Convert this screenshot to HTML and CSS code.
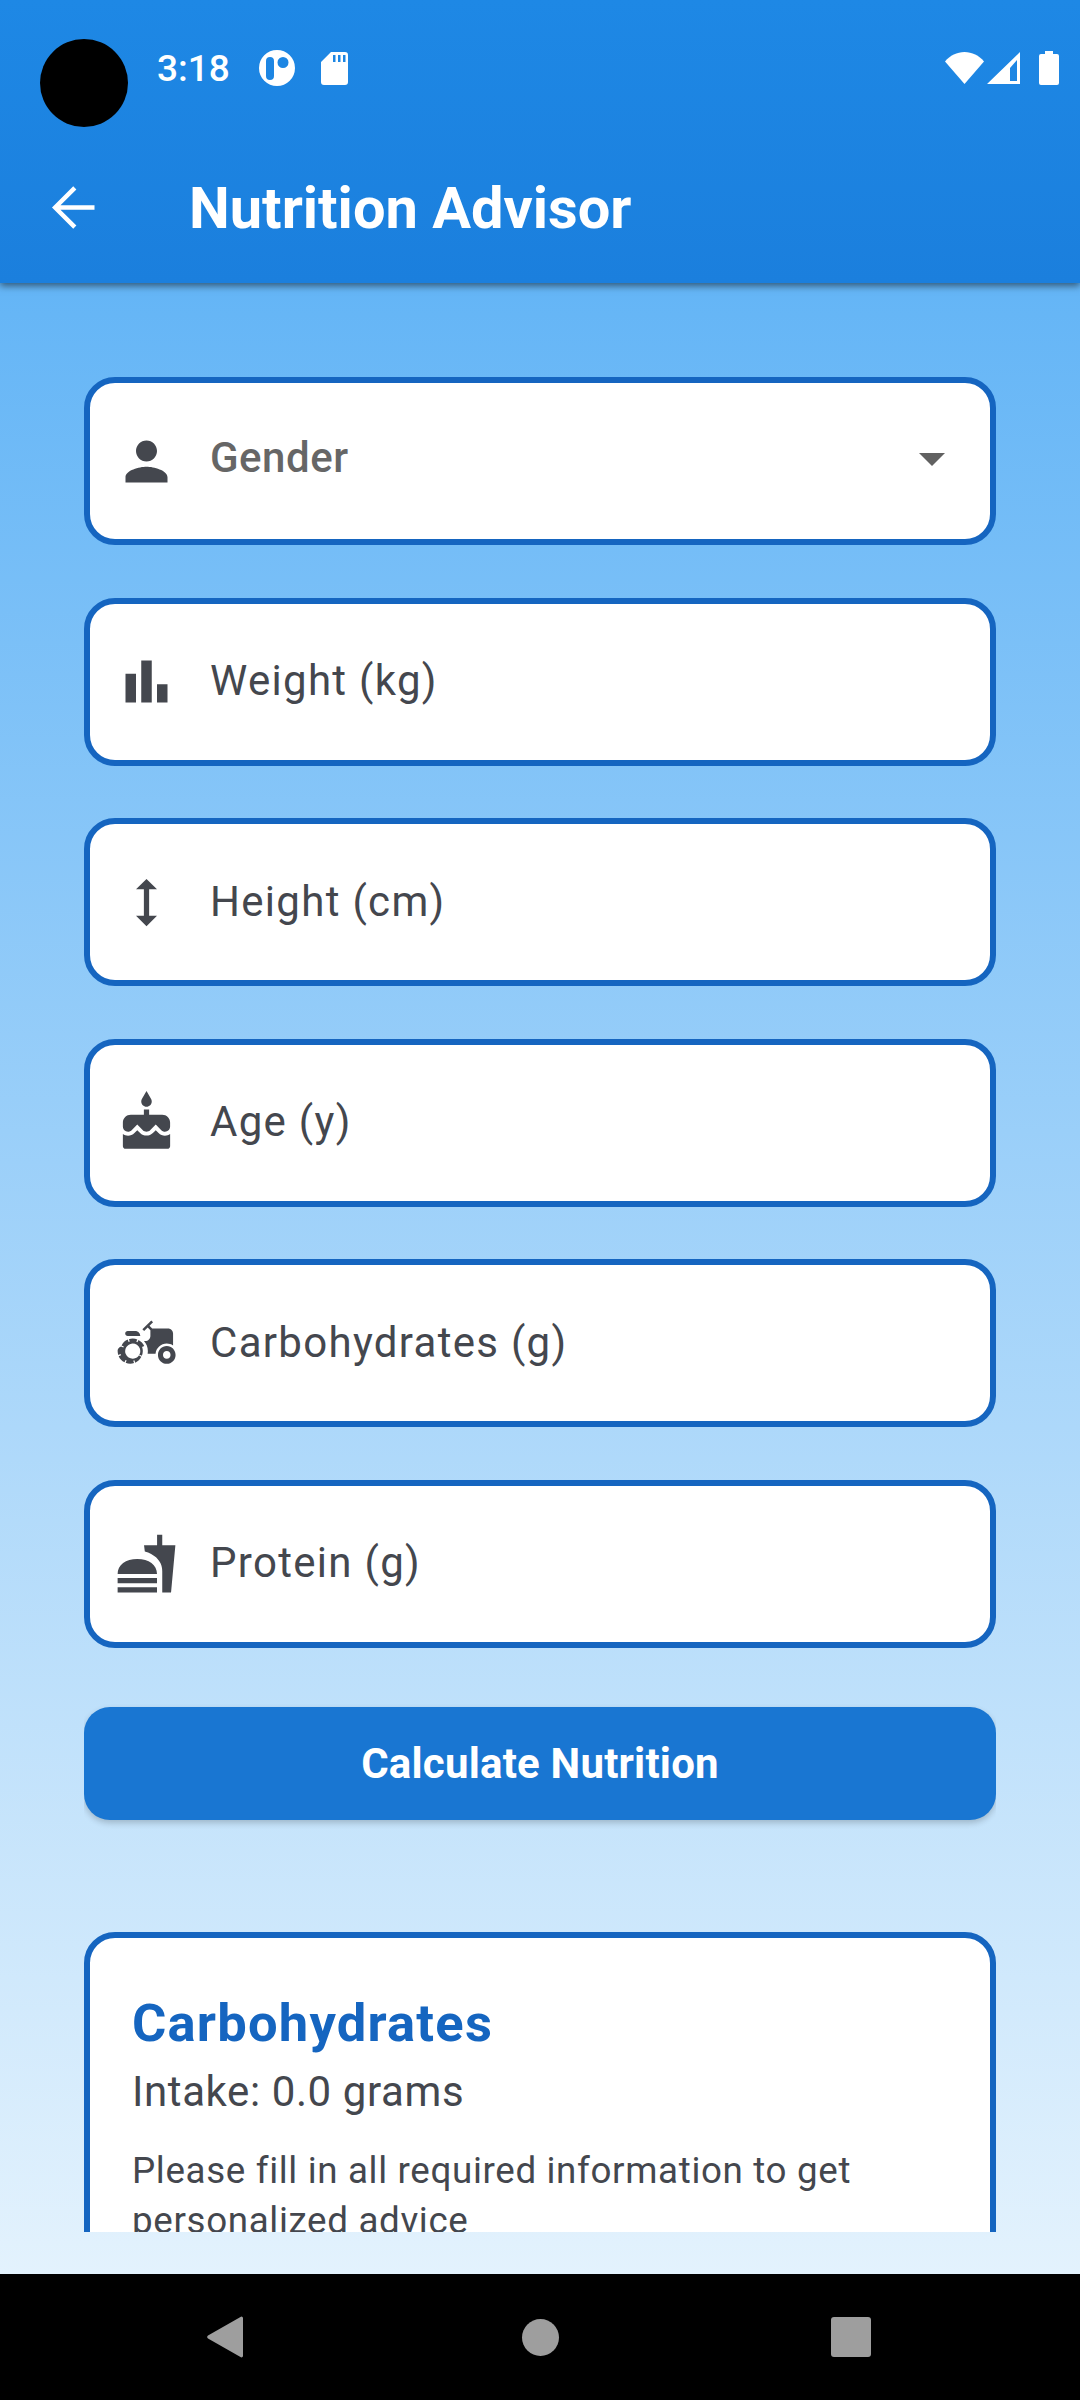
FILE: index.html
```html
<!DOCTYPE html>
<html lang="en">
<head>
    <meta charset="UTF-8">
    <meta name="viewport" content="width=device-width, initial-scale=1.0">
    <title>Nutrition Advisor</title>
    <link rel="stylesheet" href="styles.css">
</head>
<body>
    <div class="phone">
        <header class="top">
            <div class="camera"></div>
            <div class="statusBar">
                <span class="time">3:18</span>
                <svg class="statusApp" viewBox="0 0 36 36"><path fill="#fff" fill-rule="evenodd" d="M18 0a18 18 0 1 0 0 36 18 18 0 0 0 0-36zM11 7a4 4 0 0 1 4 4v15a4 4 0 0 1-8 0V11a4 4 0 0 1 4-4zM24 7a5.500 5.500 0 1 1 0 11 5.500 5.500 0 0 1 0-11z"/></svg>
                <svg class="statusSd" viewBox="0 0 27 33"><path fill="#fff" fill-rule="evenodd" d="M10 0h14a3 3 0 0 1 3 3v27a3 3 0 0 1-3 3H3a3 3 0 0 1-3-3V10zM12 3v7h2.500V3zM17 3v7h2.500V3zM22 3v7h2.500V3z"/></svg>
                <div class="statusRight">
                    <svg class="statusWifi" viewBox="0 0 39 32"><path fill="#fff" d="M0 9.500C5 3.500 12 0 19.500 0S34 3.500 39 9.500L19.500 32z"/></svg>
                    <svg class="statusSignal" viewBox="0 0 33 32"><path fill="#fff" fill-rule="evenodd" d="M33 0v32H0zM30 8l-7 8v13h7z"/></svg>
                    <svg class="statusBattery" viewBox="0 0 20 34"><path fill="#fff" d="M6 0h8v3h4a2 2 0 0 1 2 2v27a2 2 0 0 1-2 2H2a2 2 0 0 1-2-2V5a2 2 0 0 1 2-2h4z"/></svg>
                </div>
            </div>
            <div class="appBar">
                <svg class="backIcon" viewBox="0 0 24 24"><path fill="none" stroke="#fff" stroke-width="1.700" d="M20 12H5M12.500 4.500L5 12l7.500 7.500"/></svg>
                <h1 class="appTitle">Nutrition Advisor</h1>
            </div>
        </header>

        <main class="content">
            <div class="scroller">
                <form class="fields">
                    <div class="field">
                        <svg class="fieldIcon" viewBox="0 0 24 24"><path d="M12 12c2.210 0 4-1.790 4-4s-1.790-4-4-4-4 1.790-4 4 1.790 4 4 4zm0 2c-2.670 0-8 1.340-8 4v2h16v-2c0-2.660-5.330-4-8-4z"/></svg>
                        <span class="fieldLabel hint">Gender</span>
                        <span class="dropArrow"></span>
                    </div>
                    <div class="field">
                        <svg class="fieldIcon" viewBox="0 0 24 24"><path d="M4 9h4v11H4zM10 4h4v16h-4zM16 13h4v7h-4z"/></svg>
                        <span class="fieldLabel">Weight (kg)</span>
                    </div>
                    <div class="field">
                        <svg class="fieldIcon" viewBox="0 0 24 24"><path d="M13 6.990h3L12 3 8 6.990h3v10.020H8L12 21l4-3.990h-3z"/></svg>
                        <span class="fieldLabel">Height (cm)</span>
                    </div>
                    <div class="field">
                        <svg class="fieldIcon" viewBox="0 0 24 24"><path d="M12 6c1.110 0 2-.9 2-2 0-.38-.1-.73-.29-1.030L12 0l-1.710 2.970c-.19.3-.29.65-.29 1.030 0 1.100.9 2 2 2zm4.600 9.990l-1.070-1.070-1.080 1.070c-1.300 1.300-3.580 1.310-4.890 0l-1.070-1.070-1.090 1.070C6.750 16.640 5.880 17 4.960 17c-.73 0-1.400-.23-1.960-.61V21c0 .55.45 1 1 1h16c.55 0 1-.45 1-1v-4.610c-.56.38-1.230.61-1.960.61-.92 0-1.790-.36-2.440-1.010zM18 9h-5V7h-2v2H6c-1.660 0-3 1.340-3 3v1.540c0 1.080.88 1.960 1.960 1.960.52 0 1.020-.2 1.380-.57l2.140-2.130 2.130 2.130c.74.74 2.030.74 2.770 0l2.140-2.130 2.130 2.130c.37.37.86.57 1.380.57 1.080 0 1.960-.88 1.960-1.960V12C21 10.340 19.660 9 18 9z"/></svg>
                        <span class="fieldLabel">Age (y)</span>
                    </div>
                    <div class="field">
                        <svg class="fieldIcon" viewBox="0 0 24 24"><path transform="translate(1 .5) scale(.96)" d="M19.500 12c.93 0 1.780.28 2.500.76V8c0-1.100-.9-2-2-2h-6.290l-1.060-1.060 1.410-1.410-.71-.71-3.530 3.530.71.71 1.410-1.410L13 6.710V9c0 1.100-.9 2-2 2h-.54c.95 1.060 1.540 2.460 1.540 4 0 .34-.04.67-.09 1h3.140c.24-2.250 2.140-4 4.450-4zM19.500 13c-1.930 0-3.500 1.570-3.500 3.500s1.570 3.500 3.500 3.500 3.500-1.570 3.500-3.500-1.570-3.500-3.500-3.500zm0 5c-.83 0-1.500-.67-1.500-1.500s.67-1.500 1.500-1.500 1.500.67 1.500 1.500-.67 1.500-1.500 1.500zM4 9h5c0-1.100-.9-2-2-2H4c-.55 0-1 .45-1 1s.45 1 1 1zM9.830 13.820l-.18-.47.93-.35c-.46-1.060-1.280-1.910-2.310-2.430l-.4.89-.46-.21.4-.9C7.260 10.130 6.640 10 6 10c-.53 0-1.040.11-1.520.26l.34.91-.47.18L4 10.420c-1.060.46-1.910 1.280-2.430 2.310l.89.4-.21.46-.9-.4C.13 13.740 0 14.360 0 15c0 .53.11 1.040.26 1.520l.91-.34.18.47-.93.35c.46 1.060 1.280 1.910 2.310 2.430l.4-.89.46.21-.4.9c.55.22 1.170.35 1.810.35.53 0 1.040-.11 1.520-.26l-.34-.91.47-.18.35.93c1.060-.46 1.910-1.280 2.430-2.310l-.89-.4.21-.46.9.4c.22-.55.35-1.170.35-1.810 0-.53-.11-1.040-.26-1.520l-.91.34zm-2.680 3.950c-1.530.63-3.290-.09-3.920-1.620-.63-1.530.09-3.290 1.620-3.920 1.530-.63 3.290.09 3.920 1.620.64 1.530-.09 3.290-1.620 3.920z"/></svg>
                        <span class="fieldLabel">Carbohydrates (g)</span>
                    </div>
                    <div class="field">
                        <svg class="fieldIcon" viewBox="0 0 24 24"><path d="M18 23h3.350L23 5.050h-5V1h-1.970v4.050h-4.970l.3 2.340c1.710.47 3.310 1.320 4.270 2.260 1.440 1.420 2.370 2.950 2.370 5.350zM1 21h15v2H1zM1 17.500h15v2H1zM1 16c0-3.500 3.100-5.700 7.500-5.700S16 12.500 16 16z"/></svg>
                        <span class="fieldLabel">Protein (g)</span>
                    </div>
                </form>

                <button class="calcButton" type="button">Calculate Nutrition</button>

                <section class="resultCard">
                    <h2 class="resultTitle">Carbohydrates</h2>
                    <p class="resultIntake">Intake: 0.0 grams</p>
                    <p class="resultAdvice">Please fill in all required information to get personalized advice</p>
                </section>
            </div>
        </main>

        <nav class="navBar">
            <svg class="navBack" viewBox="0 0 36 42"><path fill="#9e9e9e" d="M36 2v38a1.500 1.500 0 0 1-2.500 1L1 22.500a2 2 0 0 1 0-3L33.500 1A1.500 1.500 0 0 1 36 2z"/></svg>
            <span class="navHome"></span>
            <span class="navRecent"></span>
        </nav>
    </div>
</body>
</html>
```

FILE: styles.css
```css
* {
    box-sizing: border-box;
}
body {
    margin: 0;
    font-family: Roboto, "Noto Sans", sans-serif;
}
.phone {
    display: flex;
    flex-direction: column;
    width: 1080px;
    height: 2400px;
    overflow: hidden;
}

/* status bar and app bar */
.top {
    position: relative;
    z-index: 1;
    height: 283px;
    flex-shrink: 0;
    background: linear-gradient(#1e88e5, #1b7fdd);
    box-shadow: 0 3px 7px rgba(0, 0, 0, 0.5);
}
.camera {
    position: absolute;
    left: 40px;
    top: 39px;
    width: 88px;
    height: 88px;
    border-radius: 50%;
    background: #000;
}
.statusBar {
    display: flex;
    align-items: center;
    height: 68px;
    margin-top: 34px;
    padding: 0 21px 0 157px;
    color: #fff;
}
.time {
    font-size: 37px;
    font-weight: 500;
}
.statusApp {
    width: 36px;
    height: 36px;
    margin-left: 29px;
}
.statusSd {
    width: 27px;
    height: 33px;
    margin-left: 26px;
}
.statusRight {
    display: flex;
    align-items: center;
    margin-left: auto;
}
.statusWifi {
    width: 39px;
    height: 32px;
}
.statusSignal {
    width: 33px;
    height: 32px;
    margin-left: 3px;
}
.statusBattery {
    width: 20px;
    height: 34px;
    margin-left: 19px;
}
.appBar {
    display: flex;
    align-items: center;
    height: 181px;
    padding: 30px 0 0 42px;
}
.backIcon {
    width: 63px;
    height: 63px;
}
.appTitle {
    margin: 0 0 0 84px;
    font-size: 57.750px;
    font-weight: 700;
    color: #fff;
}

/* main area */
.content {
    flex: 1;
    min-height: 0;
    padding: 94px 84px 42px;
    background: linear-gradient(#64b5f6, #e3f2fd);
}
.scroller {
    height: 100%;
    overflow: hidden;
}
.fields {
    display: flex;
    flex-direction: column;
    gap: 52.500px;
}
.field {
    display: flex;
    align-items: center;
    height: 168px;
    padding: 0 45px 0 25px;
    background: #fff;
    border: 6px solid #1565c0;
    border-radius: 31px;
}
.fieldIcon {
    flex-shrink: 0;
    width: 63px;
    height: 63px;
    fill: #44474e;
}
.fieldLabel {
    margin-left: 32px;
    margin-top: -2px;
    font-size: 42px;
    letter-spacing: 1.300px;
    color: #44474e;
}
.hint {
    margin-top: -8px;
    font-weight: 500;
    letter-spacing: 0.500px;
    color: #666;
}
.dropArrow {
    width: 0;
    height: 0;
    margin-left: auto;
    margin-top: -4px;
    border-left: 13px solid transparent;
    border-right: 13px solid transparent;
    border-top: 13px solid #616161;
}
.calcButton {
    display: block;
    width: 100%;
    height: 113px;
    margin-top: 59px;
    border: 0;
    border-radius: 26px;
    background: #1976d2;
    color: #fff;
    font-family: inherit;
    font-size: 42px;
    font-weight: 700;
    letter-spacing: 0.200px;
    box-shadow: 0 3px 6px rgba(0, 0, 0, 0.2);
}
.resultCard {
    margin-top: 112px;
    padding: 54px 42px;
    background: #fff;
    border: 6px solid #1565c0;
    border-radius: 31px;
}
.resultTitle {
    margin: 0;
    font-size: 52.500px;
    font-weight: 700;
    letter-spacing: 1.200px;
    color: #1565c0;
}
.resultIntake {
    margin: 13px 0 0;
    font-size: 42px;
    letter-spacing: 0.600px;
    color: #44474e;
}
.resultAdvice {
    margin: 30px 0 0;
    font-size: 36.750px;
    line-height: 50px;
    letter-spacing: 0.650px;
    color: #44474e;
}

/* android nav */
.navBar {
    display: flex;
    align-items: center;
    justify-content: center;
    height: 126px;
    flex-shrink: 0;
    padding-right: 3px;
    background: #000;
}
.navBack {
    width: 36px;
    height: 42px;
}
.navHome {
    width: 37px;
    height: 37px;
    margin-left: 279px;
    border-radius: 50%;
    background: #9e9e9e;
}
.navRecent {
    width: 40px;
    height: 40px;
    margin-left: 272px;
    border-radius: 3px;
    background: #9e9e9e;
}
```
